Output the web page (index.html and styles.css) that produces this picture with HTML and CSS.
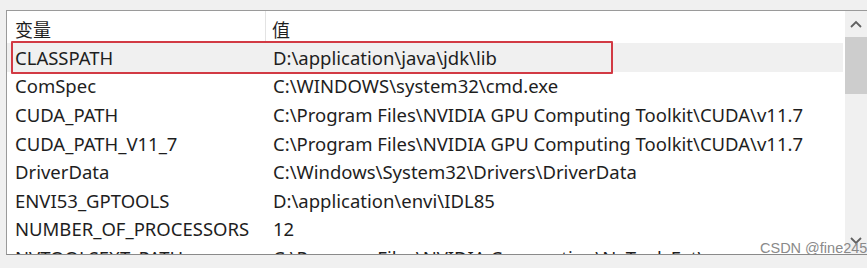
FILE: index.html
```html
<!DOCTYPE html>
<html lang="zh">
<head>
<meta charset="utf-8">
<title>环境变量</title>
<link rel="stylesheet" href="styles.css">
</head>
<body>
<div class="screen">
  <div class="topband"></div>
  <div class="panel">
    <div class="list">
      <div class="head">
        <div class="hcell c1">变量</div>
        <div class="hcell c2">值</div>
      </div>
      <div class="rows">
        <div class="row sel"><span class="c1">CLASSPATH</span><span class="c2">D:\application\java\jdk\lib</span></div>
        <div class="row"><span class="c1">ComSpec</span><span class="c2">C:\WINDOWS\system32\cmd.exe</span></div>
        <div class="row"><span class="c1">CUDA_PATH</span><span class="c2">C:\Program Files\NVIDIA GPU Computing Toolkit\CUDA\v11.7</span></div>
        <div class="row"><span class="c1">CUDA_PATH_V11_7</span><span class="c2">C:\Program Files\NVIDIA GPU Computing Toolkit\CUDA\v11.7</span></div>
        <div class="row"><span class="c1">DriverData</span><span class="c2">C:\Windows\System32\Drivers\DriverData</span></div>
        <div class="row"><span class="c1">ENVI53_GPTOOLS</span><span class="c2">D:\application\envi\IDL85</span></div>
        <div class="row"><span class="c1">NUMBER_OF_PROCESSORS</span><span class="c2">12</span></div>
        <div class="row"><span class="c1">NVTOOLSEXT_PATH</span><span class="c2">C:\Program Files\NVIDIA Corporation\NvToolsExt\</span></div>
      </div>
      <div class="highlight"></div>
    </div>
    <div class="scrollbar">
      <svg class="arrow" width="12" height="8" viewBox="0 0 12 8"><path d="M1 7 L6 2 L11 7" fill="none" stroke="#606060" stroke-width="1.8"/></svg>
      <div class="track"><div class="thumb"></div></div>
      <svg class="arrow" width="12" height="8" viewBox="0 0 12 8"><path d="M1 1 L6 6 L11 1" fill="none" stroke="#606060" stroke-width="1.8"/></svg>
    </div>
  </div>
  <div class="bottomband"></div>
  <div class="watermark">CSDN @fine245</div>
</div>
</body>
</html>
```
FILE: styles.css
```css
html, body {
  margin: 0;
  padding: 0;
  background: #f0f0f0;
}
.screen {
  position: relative;
  width: 867px;
  height: 268px;
  overflow: hidden;
  display: flex;
  flex-direction: column;
  font-family: "Noto Sans", "Noto Sans CJK SC", sans-serif;
  color: #1e1e1e;
}
.topband {
  height: 10px;
  background: #f0f0f0;
  flex: none;
}
.panel {
  flex: none;
  height: 243px;
  margin-left: 6px;
  border-top: 1px solid #9a9a9a;
  border-left: 1px solid #9a9a9a;
  border-bottom: 1px solid #8a8a8a;
  background: #fff;
  display: flex;
}
.list {
  position: relative;
  flex: 1;
  overflow: hidden;
}
.head {
  display: flex;
  height: 32px;
  font-size: 18px;
}
.hcell {
  box-sizing: border-box;
  height: 100%;
  display: flex;
  align-items: center;
  padding-top: 3px;
}
.head .c1 {
  width: 259px;
  padding-left: 8px;
  border-right: 1px solid #e3e3e3;
}
.head .c2 {
  padding-left: 6px;
}
.rows {
  font-size: 18.5px;
}
.row {
  display: flex;
  align-items: center;
  height: 28.6px;
  white-space: nowrap;
}
.row.sel {
  background: #f0f0f0;
  margin-right: 2px;
}
.row .c1 {
  box-sizing: border-box;
  width: 266px;
  padding-left: 8px;
  flex: none;
}
.highlight {
  position: absolute;
  left: 4px;
  top: 30px;
  width: 598px;
  height: 29px;
  border: 2px solid #d23a44;
  border-radius: 1px;
  pointer-events: none;
}
.scrollbar {
  width: 22px;
  flex: none;
  background: #f0f0f0;
  display: flex;
  flex-direction: column;
  align-items: center;
}
.arrow {
  flex: none;
  margin: 9px 0 9px;
}
.track {
  flex: 1;
  width: 100%;
}
.thumb {
  height: 57px;
  background: #cdcdcd;
}
.bottomband {
  flex: 1;
  background: #f0f0f0;
}
.watermark {
  position: absolute;
  left: 760px;
  top: 240px;
  white-space: nowrap;
  font-family: "Liberation Sans", Arial, sans-serif;
  font-size: 14.5px;
  color: #8a8a8a;
}
```
